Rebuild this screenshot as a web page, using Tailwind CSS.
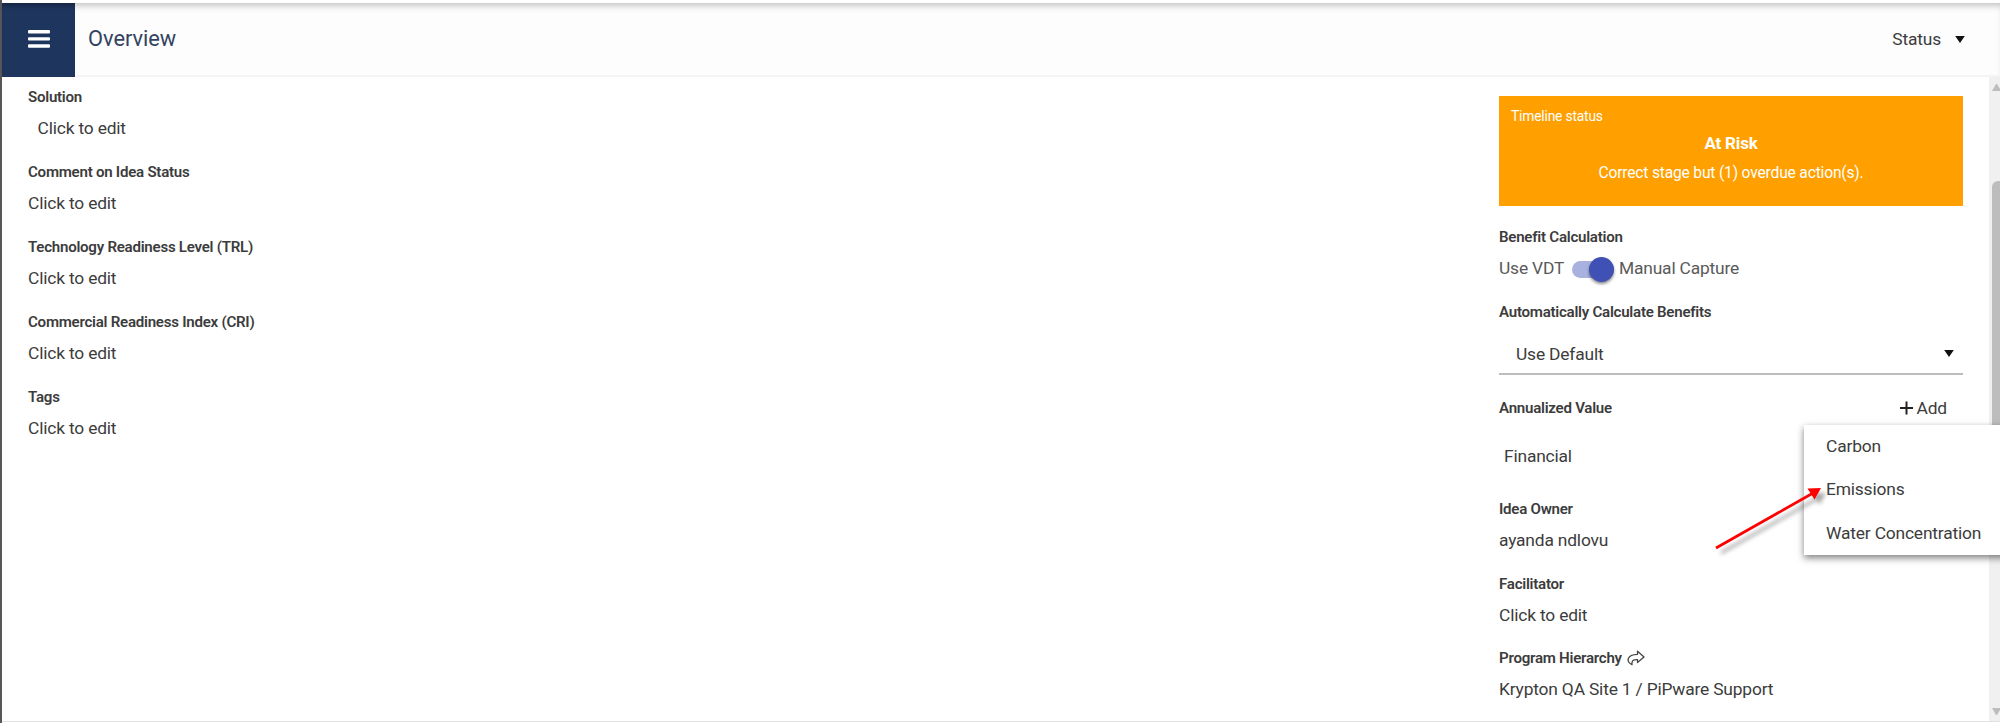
<!DOCTYPE html>
<html lang="en">
<head>
<meta charset="utf-8">
<title>Overview</title>
<script src="https://cdn.jsdelivr.net/npm/@tailwindcss/browser@4"></script>
</head>
<body class="relative flex h-[723px] w-[2000px] flex-col overflow-hidden border-l-2 border-[#55555a] bg-white pt-[3px] font-['Roboto',sans-serif] text-[17.4px] leading-6 tracking-[-0.18px] text-[#3c3c3c]">
  <header class="flex h-[74px] shrink-0 items-stretch border-b-2 border-[#f4f4f4] bg-[#fdfdfd] shadow-[inset_0_6px_6px_-3px_rgba(0,0,0,0.22)]">
    <button class="flex h-[74px] w-[73px] items-center justify-center bg-[#1e355e] shadow-[inset_0_5px_5px_-3px_rgba(0,0,0,0.35)]" aria-label="Menu">
      <svg class="-mt-0.5" width="22" height="20" viewBox="0 0 22 20" fill="#fff"><rect x="0" y="1" width="22" height="3.6" rx="1"/><rect x="0" y="8.2" width="22" height="3.4" rx="1"/><rect x="0" y="15.2" width="22" height="3.6" rx="1"/></svg>
    </button>
    <h1 class="ml-[13px] mt-[22px] text-[21.8px] leading-7 tracking-[-0.02px] text-[#32435f]">Overview</h1>
    <div class="ml-auto mr-[35px] mt-[24px] flex h-6 items-center gap-3.5">
      <span>Status</span>
      <svg width="10" height="7" viewBox="0 0 11 8" fill="#111"><path d="M0 0h11L5.500 8z"/></svg>
    </div>
  </header>
  <main class="flex h-[645px] shrink-0 border-b border-[#e2e2e2]">
    <section class="flex w-[1471px] flex-col pl-[26px] pt-2">
      <div class="h-[75px]"><h2 class="text-[15.1px] font-semibold tracking-[-0.26px]">Solution</h2><p class="mt-[7px] pl-[9.5px]">Click to edit</p></div>
      <div class="h-[75px]"><h2 class="text-[15.1px] font-semibold tracking-[-0.26px]">Comment on Idea Status</h2><p class="mt-[7px]">Click to edit</p></div>
      <div class="h-[75px]"><h2 class="text-[15.1px] font-semibold tracking-[-0.26px]">Technology Readiness Level (TRL)</h2><p class="mt-[7px]">Click to edit</p></div>
      <div class="h-[75px]"><h2 class="text-[15.1px] font-semibold tracking-[-0.26px]">Commercial Readiness Index (CRI)</h2><p class="mt-[7px]">Click to edit</p></div>
      <div class="h-[75px]"><h2 class="text-[15.1px] font-semibold tracking-[-0.26px]">Tags</h2><p class="mt-[7px]">Click to edit</p></div>
    </section>
    <aside class="flex w-[516px] flex-col pl-[26px] pr-[26px] pt-[19px]">
      <div class="flex h-[110px] shrink-0 flex-col bg-[#ffa000] pt-2 text-center text-white">
        <p class="pl-3 text-left text-[13.8px]">Timeline status</p>
        <p class="mt-[3px] text-[17px] font-bold">At Risk</p>
        <p class="mt-[6px] text-[15.6px]">Correct stage but (1) overdue action(s).</p>
      </div>
      <h2 class="mt-[19px] text-[15.1px] font-semibold tracking-[-0.26px]">Benefit Calculation</h2>
      <div class="mt-[8px] flex h-6 items-center text-[#5a5a5a]">
        <span class="-mt-0.5 w-[73px]">Use VDT</span>
        <span class="flex h-[17px] w-[42px] items-center justify-end rounded-full bg-[#a9b1df]"><span class="size-[25px] shrink-0 rounded-full bg-[#3f51b5] shadow-[0_2px_3px_rgba(0,0,0,0.45)]"></span></span>
        <span class="-mt-0.5 ml-[5px]">Manual Capture</span>
      </div>
      <h2 class="mt-[19px] text-[15.1px] font-semibold tracking-[-0.26px]">Automatically Calculate Benefits</h2>
      <div class="mt-[10px] flex h-[41px] items-center justify-between border-b-2 border-[#bdbdbd] pl-[17px] pr-[9px]">
        <span>Use Default</span>
        <svg width="10" height="7" viewBox="0 0 11 8" fill="#111"><path d="M0 0h11L5.500 8z"/></svg>
      </div>
      <div class="mt-[21px] flex h-6 items-center justify-between pr-4">
        <h2 class="text-[15.1px] font-semibold tracking-[-0.26px]">Annualized Value</h2>
        <span class="flex items-center gap-1"><svg width="13" height="14" viewBox="0 0 13 14" stroke="#222" stroke-width="2"><path d="M6.500 .5v13M0 7h13"/></svg>Add</span>
      </div>
      <p class="mt-[24px] pl-[5px]">Financial</p>
      <h2 class="mt-[29px] text-[15.1px] font-semibold tracking-[-0.26px]">Idea Owner</h2>
      <p class="mt-[7px]">ayanda ndlovu</p>
      <h2 class="mt-[20px] text-[15.1px] font-semibold tracking-[-0.26px]">Facilitator</h2>
      <p class="mt-[7px]">Click to edit</p>
      <h2 class="mt-[19px] flex items-center gap-[5px] text-[15.1px] font-semibold tracking-[-0.26px]">Program Hierarchy
        <svg width="18" height="16" viewBox="0 0 18 16" fill="none" stroke="#444" stroke-width="1.300" stroke-linejoin="round"><path d="M10.500 1.200 17 7l-6.500 5.600V9.600C7 9.300 4.500 10.200 5 14.600 -1 11.800 -.5 4.700 10.500 4.300z"/></svg>
      </h2>
      <p class="mt-[7px]">Krypton QA Site 1 / PiPware Support</p>
    </aside>
    <div class="flex flex-1 flex-col items-end overflow-hidden bg-[#f0f0f0]">
      <svg class="mt-[7px] shrink-0" width="8" height="7" viewBox="0 0 8 7" fill="#bdbdbd"><path d="M0 7 4 0h1l3 5v2z"/></svg>
      <div class="mt-[90px] h-[300px] w-2 shrink-0 rounded-tl-md bg-[#bdbdbd]"></div>
      <svg class="mb-[6px] mt-auto shrink-0" width="8" height="7" viewBox="0 0 8 7" fill="#bdbdbd"><path d="M0 0h8v2L5 7H4z"/></svg>
    </div>
  </main>
  <div class="absolute left-[1802px] top-[425px] flex h-[130px] w-[220px] flex-col bg-white pl-[22px] pt-[9px] shadow-[0_3px_7px_rgba(0,0,0,0.5)]">
    <span>Carbon</span><span class="mt-[19px]">Emissions</span><span class="mt-[20px]">Water Concentration</span>
  </div>
  <svg class="absolute left-[1708px] top-[480px]" width="130" height="80" viewBox="0 0 130 80">
    <g class="drop-shadow-[5px_5px_2px_rgba(0,0,0,0.35)]" fill="red" stroke="red"><path d="M6 68 104 12.500" stroke-width="2.700"/><path stroke="none" d="M111 8 97.500 8.500 104.500 19.500z"/></g>
  </svg>
</body>
</html>
